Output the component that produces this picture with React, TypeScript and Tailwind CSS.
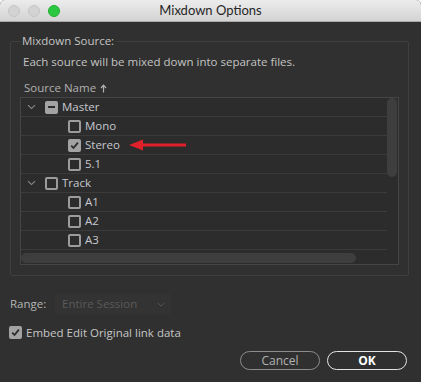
import React from "react";

const font = { fontFamily: "'Open Sans', Lato, sans-serif" };

function Chevron() {
  return (
    <svg width="9" height="6" viewBox="0 0 9 6" className="shrink-0">
      <path d="M1 1.2 L4.5 4.6 L8 1.2" fill="none" stroke="#8c8c8c" strokeWidth="1.1" />
    </svg>
  );
}

function Box({ state }: { state: "off" | "on" | "mixed" }) {
  if (state === "off") {
    return <div className="w-[13px] h-[13px] shrink-0 rounded-[2px] border-2 border-[#9c9c9c] box-border" />;
  }
  if (state === "mixed") {
    return (
      <div className="w-[13px] h-[13px] shrink-0 rounded-[2px] bg-[#a3a3a3] flex items-center justify-center">
        <div className="w-[7px] h-[2px] bg-[#2d2d2d]" />
      </div>
    );
  }
  return (
    <div className="w-[13px] h-[13px] shrink-0 rounded-[2px] bg-[#a3a3a3] flex items-center justify-center">
      <svg width="11" height="11" viewBox="0 0 11 11">
        <path d="M2.2 5.6 L4.5 8 L8.9 2.6" fill="none" stroke="#2b2b2b" strokeWidth="1.8" />
      </svg>
    </div>
  );
}

function Row({
  level,
  label,
  state,
  chevron,
  arrow,
}: {
  level: 0 | 1;
  label?: string;
  state: "off" | "on" | "mixed";
  chevron?: boolean;
  arrow?: boolean;
}) {
  return (
    <div className="h-[19px] shrink-0 border-b border-[#3b3b3b] flex items-center box-border">
      {level === 0 ? (
        <div className="flex items-center">
          <div className="w-[24px] flex pl-[6px]">{chevron && <Chevron />}</div>
          <Box state={state} />
          <span className="ml-[4px] text-[11.5px] text-[#c6c8cf] leading-none">{label}</span>
        </div>
      ) : (
        <div className="flex items-center pl-[47px]">
          <Box state={state} />
          {label && <span className="ml-[4px] text-[11.5px] text-[#c6c8cf] leading-none">{label}</span>}
          {arrow && (
            <svg width="58" height="12" viewBox="0 0 58 12" className="ml-[9px]">
              <path d="M13 6 L57 6" stroke="#e0202b" strokeWidth="3" />
              <path d="M0 6 L14 0.5 L14 11.5 Z" fill="#e0202b" />
            </svg>
          )}
        </div>
      )}
    </div>
  );
}

export default function App() {
  return (
    <div className="w-[421px] h-[382px] bg-white" style={font}>
      <div className="w-[421px] h-[382px] rounded-t-[5px] overflow-hidden flex flex-col bg-[#303030]">
        {/* Title bar */}
        <div className="h-[22px] shrink-0 bg-gradient-to-b from-[#ececec] to-[#d3d3d3] border-b border-[#a9a9a9] flex items-center">
          <div className="flex items-center gap-[8px] pl-[8px]">
            <div className="w-[12px] h-[12px] rounded-full bg-[#d3d3d3] border border-[#c5c5c5]" />
            <div className="w-[12px] h-[12px] rounded-full bg-[#d3d3d3] border border-[#c5c5c5]" />
            <div className="w-[12px] h-[12px] rounded-full bg-[#2ac840] border border-[#1fae2f]" />
          </div>
          <div className="flex-1 text-center text-[13px] text-[#262626] pr-[60px] leading-none" style={{ fontFamily: "Lato, sans-serif" }}>
            Mixdown Options
          </div>
        </div>

        {/* Body */}
        <div className="flex-1 flex flex-col pl-[10px] pr-[12px] pt-[19px]">
          {/* Group box */}
          <div className="relative border border-[#3f3f3f] rounded-[2px] pl-[9px] pr-[9px] pb-[10px]">
            <span className="absolute left-[9px] top-[-8px] px-[2px] bg-[#303030] text-[11.5px] leading-[14px] text-[#c4c4c4]">
              Mixdown Source:
            </span>
            <div className="pt-[13px] pl-[3px] text-[11.5px] leading-[14px] text-[#c4c4c4]">
              Each source will be mixed down into separate files.
            </div>
            <div className="mt-[12px] pl-[4px] text-[11.5px] leading-[14px] text-[#b0b0b0] flex items-center gap-[4px]">
              Source Name
              <svg width="7" height="9" viewBox="0 0 7 9">
                <path d="M3.5 8.5 L3.5 1.5 M1 4 L3.5 1.2 L6 4" fill="none" stroke="#b0b0b0" strokeWidth="1.2" />
              </svg>
            </div>
            {/* Table */}
            <div className="mt-[2px] h-[168px] border border-[#454545] bg-[#2c2c2c] flex flex-col overflow-hidden">
              <div className="flex-1 flex min-h-0">
                <div className="flex-1 flex flex-col overflow-hidden">
                  <Row level={0} label="Master" state="mixed" chevron />
                  <Row level={1} label="Mono" state="off" />
                  <Row level={1} label="Stereo" state="on" arrow />
                  <Row level={1} label="5.1" state="off" />
                  <Row level={0} label="Track" state="off" chevron />
                  <Row level={1} label="A1" state="off" />
                  <Row level={1} label="A2" state="off" />
                  <Row level={1} label="A3" state="off" />
                  <Row level={1} state="off" />
                </div>
                <div className="w-[11px] shrink-0 pr-[1px]">
                  <div className="w-[10px] h-[79px] rounded-full bg-[#3e3e3e]" />
                </div>
              </div>
              <div className="h-[11px] shrink-0 flex">
                <div className="w-[335px] h-[10px] rounded-full bg-[#3e3e3e]" />
              </div>
            </div>
          </div>

          {/* Range */}
          <div className="mt-[18px] h-[20px] flex items-center">
            <span className="w-[45px] text-[11.5px] leading-none text-[#b4b4b4]">Range:</span>
            <div className="w-[116px] h-[20px] bg-[#333333] rounded-[2px] flex items-center justify-between pl-[7px] pr-[6px]">
              <span className="text-[11.5px] leading-none text-[#5a5a5a]">Entire Session</span>
              <svg width="8" height="5" viewBox="0 0 8 5">
                <path d="M0.8 0.8 L4 4 L7.2 0.8" fill="none" stroke="#555" strokeWidth="1" />
              </svg>
            </div>
          </div>

          {/* Embed */}
          <div className="mt-[12px] h-[13px] flex items-center -ml-[1px]">
            <Box state="on" />
            <span className="ml-[4px] text-[11.5px] leading-none text-[#c6c6c6]">Embed Edit Original link data</span>
          </div>

          {/* Buttons */}
          <div className="mt-[12px] flex justify-end gap-[7px] pr-[2px]">
            <div className="w-[80px] h-[19px] rounded-full border-[1.5px] border-[#8c8c8c] flex items-center justify-center text-[12px] leading-none text-[#b2b2b2]">
              Cancel
            </div>
            <div className="w-[80px] h-[19px] rounded-full border-[1.5px] border-[#e4e4e4] flex items-center justify-center text-[12px] leading-none font-bold text-white">
              OK
            </div>
          </div>
        </div>
      </div>
    </div>
  );
}
